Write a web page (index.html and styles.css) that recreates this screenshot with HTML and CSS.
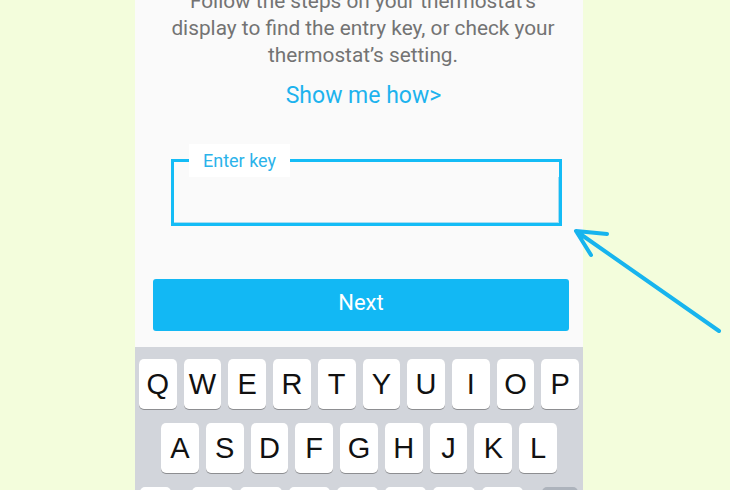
FILE: index.html
```html
<!DOCTYPE html>
<html lang="en">
<head>
  <meta charset="UTF-8" />
  <meta name="viewport" content="width=device-width, initial-scale=1.0"/>
  <title>Enter key</title>
  <link rel="stylesheet" href="styles.css">
</head>
<body>
  <div class="phone">
    <p class="hint">Follow the steps on your thermostat’s display to find the entry key, or check your thermostat’s setting.</p>
    <div class="show-how">Show me how&gt;</div>

    <fieldset class="key-field">
      <legend>Enter key</legend>
      <div class="key-input"></div>
    </fieldset>

    <button class="next-btn">Next</button>

    <!-- Keyboard -->
    <div class="keyboard">
      <div class="row row-1">
        <div class="key">Q</div><div class="key">W</div><div class="key">E</div><div class="key">R</div><div class="key">T</div>
        <div class="key">Y</div><div class="key">U</div><div class="key">I</div><div class="key">O</div><div class="key">P</div>
      </div>
      <div class="row row-2">
        <div class="key">A</div><div class="key">S</div><div class="key">D</div><div class="key">F</div><div class="key">G</div>
        <div class="key">H</div><div class="key">J</div><div class="key">K</div><div class="key">L</div>
      </div>
      <!-- third row only peeks in at the bottom edge -->
      <div class="row row-3">
        <div class="key shift"></div>
        <div class="key"></div><div class="key"></div><div class="key"></div><div class="key"></div>
        <div class="key"></div><div class="key"></div><div class="key"></div>
        <div class="key back"></div>
      </div>
    </div>
  </div>

  <svg class="arrow" width="730" height="490" viewBox="0 0 730 490">
    <path d="M719 331 L576 231 M576 231 L607 234 M576 231 L591 255" fill="none" stroke="#17b4ee" stroke-width="4" stroke-linecap="round" stroke-linejoin="round"/>
  </svg>
</body>
</html>
```

FILE: styles.css
```css
body {
  margin: 0;
  height: 490px;
  overflow: hidden;
  background-color: #f3fddc;
  font-family: Roboto, "Noto Sans", sans-serif;
}

.phone {
  width: 448px;
  height: 490px;
  margin-left: 135px;
  background-color: #fafafa;
  display: flex;
  flex-direction: column;
  overflow: hidden;
}

.phone > * {
  flex-shrink: 0;
}

.hint {
  margin: -12px 0 0 0;
  padding: 0 26px 0 34px;
  font-size: 20.8px;
  line-height: 27px;
  color: #737373;
  text-align: center;
}

.show-how {
  margin-top: 12px;
  padding-left: 9px;
  font-size: 23px;
  line-height: 30px;
  color: #1db3ee;
  text-align: center;
}

.key-field {
  margin: 33px 21px 0 36px;
  padding: 0;
  border: 3px solid #14bcf6;
  min-width: 0;
}

.key-field legend {
  margin-left: 15px;
  padding: 0 14px;
  height: 33px;
  line-height: 33px;
  background-color: #ffffff;
  font-size: 18px;
  color: #2bb3ea;
}

.key-input {
  height: 45px;
  border-right: 1px solid #a6ddf2;
  border-bottom: 1px solid #a6ddf2;
}

.next-btn {
  margin: 53px 14px 0 18px;
  height: 52px;
  padding: 0 0 5px 0;
  border: none;
  border-radius: 3px;
  background-color: #12b8f4;
  color: #ffffff;
  font-family: Roboto, "Noto Sans", sans-serif;
  font-size: 22px;
}

.keyboard {
  margin-top: 16px;
  flex: 1 0 auto;
  background-color: #d2d5db;
  padding-top: 12px;
}

.row {
  display: grid;
  gap: 7px;
  height: 50px;
  margin-bottom: 14px;
}

.row-1 {
  grid-template-columns: repeat(10, 1fr);
  padding: 0 4px;
}

.row-2 {
  grid-template-columns: repeat(9, 1fr);
  padding: 0 26px;
}

.row-3 {
  grid-template-columns: 45px repeat(7, 1fr) 48px;
  gap: 7px;
  padding: 0 5px;
}

.key {
  background-color: #ffffff;
  border-radius: 5px;
  box-shadow: 0 1px 0 #8d8e91;
  font-family: "Liberation Sans", Arial, sans-serif;
  font-size: 29px;
  line-height: 50px;
  text-align: center;
  color: #111111;
}

.key.shift {
  margin-right: 14px;
}

.key.back {
  background-color: #adb3bc;
  margin-left: 12px;
}

.arrow {
  position: absolute;
  left: 0;
  top: 0;
}
```
